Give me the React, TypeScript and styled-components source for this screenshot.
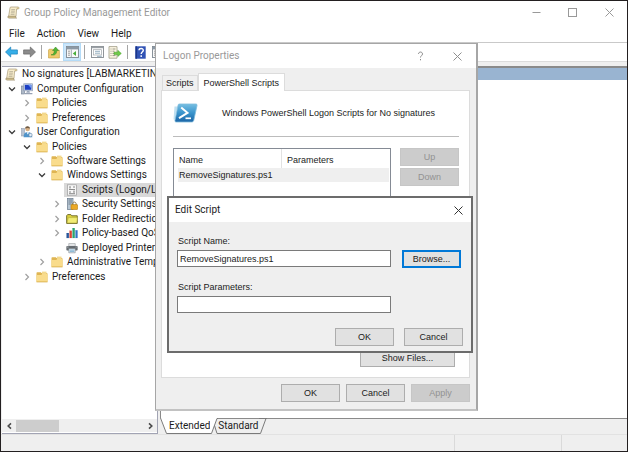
import React from "react";
import styled, { createGlobalStyle, css } from "styled-components";

const GlobalStyle = createGlobalStyle`
  * { box-sizing: border-box; }
  body { margin: 0; background: #fff; color: #1b1b1b; font: 10px/14px Roboto, "Open Sans", sans-serif; }
  button, input { font: inherit; color: inherit; margin: 0; border-radius: 0; }
  ul { list-style: none; margin: 0; padding: 0; }
`;

/* ---------- console window ---------- */

const Window = styled.main`
  position: relative;
  display: flex;
  flex-direction: column;
  min-height: 100vh;
  border: 1px solid #231f20;
  background: #efefef;
  overflow: hidden;
`;

const TitleBar = styled.header`
  display: flex;
  align-items: center;
  height: 23px;
  padding-left: 6px;
  background: #fff;
  color: #999;
`;

const WindowTitle = styled.h1`
  flex: 1;
  margin: 0 0 0 4px;
  font-size: 10px;
  font-weight: 400;
`;

const CaptionButton = styled.button<{ $width: number }>`
  display: flex;
  align-items: center;
  justify-content: center;
  width: ${(p) => p.$width}px;
  height: 22px;
  padding: 0;
  border: 0;
  background: transparent;
`;

const MenuBar = styled.nav`
  display: flex;
  gap: 12px;
  height: 19px;
  padding-left: 8px;
  background: #fff;
  border-bottom: 1px solid #c9c9c9;
`;

const MenuButton = styled.button`
  padding: 2px 0 0;
  border: 0;
  background: transparent;
  line-height: 14px;
`;

const Toolbar = styled.div`
  display: flex;
  align-items: center;
  height: 19px;
  padding-left: 1px;
  background: #fff;
  border-bottom: 1px solid #dcdcdc;
`;

const ToolButton = styled.button<{ $active?: boolean }>`
  display: flex;
  align-items: center;
  justify-content: center;
  width: 18px;
  height: 18px;
  padding: 0;
  border: 1px solid ${(p) => (p.$active ? "#b4dbf7" : "transparent")};
  background: ${(p) => (p.$active ? "#cce6fa" : "transparent")};
`;

const ToolSeparator = styled.span`
  width: 1px;
  height: 14px;
  margin: 0 3px;
  background: #a5a5a5;
`;

const Workspace = styled.div`
  flex: 1;
  display: flex;
  gap: 2px;
  padding: 4px 0 0 1px;
`;

/* ---------- tree pane ---------- */

const TreePane = styled.aside`
  display: flex;
  flex-direction: column;
  justify-content: space-between;
  width: 156px;
  background: #fff;
  border: solid #a2a4b4;
  border-width: 1px 1px 1px 0;
  overflow: hidden;
`;

const Tree = styled.ul`
  display: grid;
  grid-auto-rows: 1fr;
  height: 217px;
`;

const TreeRow = styled.li<{ $level: number }>`
  display: flex;
  align-items: center;
  padding-left: ${(p) => 3 + p.$level * 15}px;
  white-space: nowrap;
`;

const Expander = styled.button`
  display: flex;
  align-items: center;
  justify-content: center;
  flex: none;
  width: 14px;
  height: 14px;
  padding: 0;
  border: 0;
  background: transparent;
`;

const ExpanderSpace = styled.span`
  flex: none;
  width: 14px;
`;

const TreeItem = styled.span<{ $selected?: boolean; $root?: boolean }>`
  display: flex;
  flex: 1;
  align-items: center;
  gap: 4px;
  padding-left: ${(p) => (p.$root ? 0 : 2)}px;
  background: ${(p) => (p.$selected ? "#d9d9d9" : "transparent")};
`;

const ScrollBar = styled.div`
  display: flex;
  align-items: center;
  height: 13px;
  margin-bottom: 1px;
  background: #efefef;
`;

const ScrollArrow = styled.button`
  display: flex;
  align-items: center;
  justify-content: center;
  width: 14px;
  height: 13px;
  padding: 0;
  border: 0;
  background: transparent;
`;

const ScrollTrack = styled.div`
  flex: 1;
  height: 12px;
`;

const ScrollThumb = styled.div`
  width: 34%;
  height: 12px;
  background: #cdcdcd;
`;

/* ---------- detail pane ---------- */

const DetailPane = styled.section`
  flex: 1;
  display: flex;
  flex-direction: column;
`;

const DetailBody = styled.div`
  flex: 1;
  background: #fff;
  border: solid #8a8a8a;
  border-width: 2px 0 0 1px;
`;

const DetailHeader = styled.div`
  height: 12px;
  background: #99b4d1;
`;

const ViewTabs = styled.div`
  display: flex;
  height: 16px;
`;

const ViewTabsFill = styled.div`
  flex: 1;
  border-top: 1px solid #8a8a8a;
`;

const ViewTabButton = styled.button<{ $active?: boolean }>`
  display: flex;
  padding: 0;
  border: 0;
  line-height: 14px;
  background: transparent;
`;

const ViewTabText = styled.span<{ $active?: boolean }>`
  height: 16px;
  padding: ${(p) => (p.$active ? "1px 0 0 1px" : "0")};
  background: ${(p) => (p.$active ? "#fff" : "#efefef")};
  border-bottom: 1px solid #7a7a7a;
  border-top: ${(p) => (p.$active ? "0" : "1px solid #8a8a8a")};
`;

const StatusBar = styled.footer`
  display: grid;
  grid-template-columns: 453fr 107fr 65fr;
  height: 17px;
  border-top: 1px solid #e2e2e2;
`;

const StatusCell = styled.span`
  border-right: 1px solid #dadada;
  &:last-child { border-right: 0; }
`;

/* ---------- dialogs ---------- */

const dialogText = css`
  font: 9px/12px "Liberation Sans", Arial, sans-serif;
`;

const PropertiesDialog = styled.section`
  position: absolute;
  left: 154px;
  top: 42px;
  width: 323px;
  background: #efefef;
  border: 1px solid #a6a6a6;
  border-right-width: 2px;
  border-bottom: 2px solid #c2c2c2;
  ${dialogText}
`;

const DialogTitleBar = styled.header<{ $muted?: boolean }>`
  display: flex;
  align-items: center;
  height: 24px;
  padding-left: ${(p) => (p.$muted ? 7 : 6)}px;
  background: #fff;
  color: ${(p) => (p.$muted ? "#999" : "#1b1b1b")};
`;

const DialogTitle = styled.h2`
  flex: 1;
  margin: 0;
  font: 400 10px/14px Roboto, "Open Sans", sans-serif;
`;

const PropertyTabs = styled.div`
  display: flex;
  align-items: flex-end;
  height: 22px;
  padding: 0 6px;
`;

const PropertyTab = styled.button<{ $active?: boolean }>`
  height: ${(p) => (p.$active ? 18 : 15)}px;
  padding: 0 ${(p) => (p.$active ? 5 : 3)}px;
  border: 1px solid #dcdcdc;
  border-bottom: 0;
  background: ${(p) => (p.$active ? "#fff" : "#f0f0f0")};
  margin-bottom: ${(p) => (p.$active ? -1 : 0)}px;
`;

const PropertySheet = styled.div`
  display: flex;
  flex-direction: column;
  height: 288px;
  margin: 0 6px 0 5px;
  padding: 0 10px 10px 11px;
  background: #fff;
  border: 1px solid #dcdcdc;
`;

const SheetHeading = styled.div`
  display: flex;
  align-items: center;
  gap: 24px;
  height: 46px;
  padding-bottom: 2px;
  border-bottom: 1px solid #bcbcbc;
`;

const SheetText = styled.p`
  margin: 0;
`;

const ScriptSection = styled.div`
  display: flex;
  align-items: flex-start;
  gap: 9px;
  flex: 1;
  margin-top: 11px;
`;

const ScriptListBox = styled.div`
  flex: 1;
  height: 180px;
  padding: 0 1px 0 4px;
  border: 1px solid #858b95;
`;

const ScriptTable = styled.table`
  width: 100%;
  border-collapse: collapse;
  table-layout: fixed;
`;

const HeaderCell = styled.th<{ $share: number }>`
  width: ${(p) => p.$share}%;
  height: 19px;
  padding: 2px 0 0 1px;
  text-align: left;
  font-weight: 400;
  & + & { padding-left: 5px; border-left: 1px solid #e2e2e2; }
`;

const ScriptCell = styled.td`
  height: 14px;
  padding: 0 0 0 1px;
  background: #efefef;
`;

const ButtonColumn = styled.div`
  display: flex;
  flex-direction: column;
  gap: 2px;
`;

const PushButton = styled.button<{ $focused?: boolean; $wide?: boolean }>`
  flex: none;
  width: ${(p) => (p.$wide ? 95 : 59)}px;
  height: 18px;
  padding: 0;
  border: ${(p) => (p.$focused ? "2px solid #0078d7" : "1px solid #adadad")};
  background: #e1e1e1;
  &:disabled {
    border-color: #c6c6c6;
    background: #cccccc;
    color: #929292;
  }
`;

const DialogActions = styled.div<{ $inset?: number }>`
  display: flex;
  justify-content: flex-end;
  gap: 10px;
  padding: 2px ${(p) => p.$inset ?? 0}px 0 0;
`;

const SheetActions = styled.div`
  display: flex;
  justify-content: flex-end;
  gap: 6px;
  padding: 6px 6px 7px;
`;

const EditDialog = styled.section`
  position: absolute;
  left: 11px;
  top: 152px;
  width: 306px;
  background: #efefef;
  border: 2px solid #6c6c6c;
`;

const EditBody = styled.form`
  display: flex;
  flex-direction: column;
  padding: 13px 8px 5px;
`;

const FieldLabel = styled.label`
  margin-bottom: 3px;
  padding-left: 1px;
`;

const FieldRow = styled.div`
  display: flex;
  gap: 11px;
  padding-right: 2px;
  margin-bottom: 13px;
`;

const TextBox = styled.input`
  flex: 1;
  min-width: 0;
  height: 17px;
  padding: 0 2px;
  border: 1px solid #7a7a7a;
  background: #fff;
  outline: 0;
`;

const ButtonSpace = styled.span`
  width: 59px;
`;

/* ---------- icons ---------- */

const CloseIcon = ({ color }: { color: string }) => (
  <svg width="9" height="9" viewBox="0 0 9 9" aria-hidden="true">
    <path d="M.5.5l8 8M8.5.5l-8 8" stroke={color} fill="none" />
  </svg>
);

const ScrollIcon = () => (
  <svg width="13" height="13" viewBox="0 0 13 13" aria-hidden="true">
    <path d="M3.500 1h7.700c1 0 1.300 2-.2 2H9.600L9 10.500H1.600L3 2z" fill="#f7eccb" stroke="#a89a78" strokeWidth=".7" />
    <path d="M1 10.200h7.600c-.3 1 .2 1.800 1 1.900H2C.9 12.100.6 11 1 10.200z" fill="#d9c793" stroke="#9c8c68" strokeWidth=".7" />
    <path d="M4.300 3.600h3.800M4.100 5.200h3.800M3.800 6.800h3.900M3.600 8.400h3.900" stroke="#a9a08b" strokeWidth=".7" />
    <path d="M9.700 1.400c.4.4.3 1.100 0 1.500h1.600c.7-.5.5-1.400 0-1.500z" fill="#cdb986" />
  </svg>
);

const FolderIcon = () => (
  <svg width="12" height="12" viewBox="0 0 12 12" aria-hidden="true">
    <path d="M.5 10.500V1.800l.6-.6h3.700l.8.8h5.300l.6.6v7.900z" fill="#dfb552" />
    <path d="M6 .6h4.500v2.500H6z" fill="#f3d88d" />
    <path d="M.5 3.900h4.700l1-1h5.300v8H.5z" fill="#f9dc8c" />
    <path d="M.5 10.900h11" stroke="#d5a944" strokeWidth=".8" />
  </svg>
);

const ComputerIcon = () => (
  <svg width="12" height="12" viewBox="0 0 12 12" aria-hidden="true">
    <rect x=".5" y="3" width="3" height="8" fill="#aeb9c8" stroke="#6f7d92" strokeWidth=".6" />
    <rect x="2.800" y=".8" width="8.600" height="7" fill="#dbe3f0" stroke="#8795ae" strokeWidth=".7" />
    <rect x="3.800" y="1.800" width="6.600" height="5" fill="#1c3fc4" />
    <path d="M7 1.800h3.400v3.700z" fill="#6f9af0" />
    <path d="M6 8h2.400l.6 1.800H5.200z" fill="#9ba7ba" />
    <path d="M4 10.200h7.400v1H4z" fill="#7d8aa0" />
  </svg>
);

const UserIcon = () => (
  <svg width="12" height="12" viewBox="0 0 12 12" aria-hidden="true">
    <rect x=".5" y="2.500" width="3" height="7.500" fill="#b9c4d2" stroke="#8592a5" strokeWidth=".5" />
    <circle cx="6.600" cy="3" r="2.300" fill="#d9b184" />
    <path d="M4.300 2.800C4 .8 5.400.2 6.600.3c1.600 0 2.500 1 2.200 2.400-1.200-.9-3-.9-4.500.1z" fill="#6f5a43" />
    <path d="M2.600 11.300c0-3.600 1.500-5.200 4-5.200s4.500 1.600 4.700 5.200z" fill="#4f93c9" />
    <path d="M5.500 6.200l1.300 2.300 1.300-2.200z" fill="#fff" />
    <circle cx="9.500" cy="9" r="1.700" fill="#e4edf6" stroke="#6688a8" strokeWidth=".6" />
  </svg>
);

const ScriptDocIcon = () => (
  <svg width="12" height="12" viewBox="0 0 12 12" aria-hidden="true">
    <rect x="1.400" y=".8" width="9" height="10.400" fill="#f7f7f7" stroke="#9c9c9c" strokeWidth=".7" />
    <path d="M3 3h2M7 3h2M3 5.500h6M3 8h2M7 8h2M3 9.700h6" stroke="#7b7b7b" strokeWidth=".9" />
    <path d="M4 3v3M8 5v3" stroke="#9a9a9a" strokeWidth=".7" />
  </svg>
);

const SecurityIcon = () => (
  <svg width="12" height="12" viewBox="0 0 12 12" aria-hidden="true">
    <rect x="1.500" y=".5" width="5.500" height="11" fill="#b7c6d3" stroke="#68798b" strokeWidth=".7" />
    <path d="M2.500 2h3.500M2.500 4h3.500M2.500 6h3" stroke="#5c6c7d" strokeWidth=".8" />
    <path d="M6.700 7V5.800c0-2.300 3.400-2.300 3.400 0V7" fill="none" stroke="#8c7b4c" strokeWidth="1" />
    <rect x="5" y="6.600" width="6.600" height="4.900" rx=".6" fill="#eba925" stroke="#b27a13" strokeWidth=".6" />
  </svg>
);

const RedirectIcon = () => (
  <svg width="12" height="12" viewBox="0 0 13 12" aria-hidden="true">
    <path d="M.7 10.800V2.400L1.800 1.200h3.400l1.100 1.300h5.900v8.300z" fill="#d9cf3e" stroke="#5f5b1c" strokeWidth=".9" />
    <path d="M1.200 10.300l1.300-5.800h9.900l-.8 5.800z" fill="#f2ec74" stroke="#a39c30" strokeWidth=".5" />
  </svg>
);

const QosIcon = () => (
  <svg width="12" height="12" viewBox="0 0 13 12" aria-hidden="true">
    <path d="M.4 6h2.700v5.500H.4z" fill="#1c4e95" />
    <path d="M3.600 3.400h2.700v8.100H3.600z" fill="#d93a2b" />
    <path d="M6.800.6h2.700v10.900H6.800z" fill="#25a06a" />
    <path d="M10 3h2.600v8.500H10z" fill="#2b72c4" />
    <path d="M.8 6.300v5M4 3.800v7.400M7.200 1v10.200M10.400 3.400v7.800" stroke="#fff" strokeWidth=".5" opacity=".6" />
  </svg>
);

const PrinterIcon = () => (
  <svg width="12" height="12" viewBox="0 0 13 12" aria-hidden="true">
    <path d="M3 1.200h7v3H3z" fill="#e8eaec" stroke="#8c9196" strokeWidth=".6" />
    <rect x=".4" y="3.800" width="12.200" height="4.800" rx=".8" fill="#656b70" />
    <path d="M1.200 5h1.600M10.400 5h1.200" stroke="#c5cacd" strokeWidth=".8" />
    <path d="M3 6.600h7v4.600H3z" fill="#dcebf4" stroke="#7b8287" strokeWidth=".6" />
    <path d="M4 8.300h5M4 9.700h5" stroke="#5b9ac2" strokeWidth=".7" />
  </svg>
);

const Chevron = ({ open }: { open?: boolean }) => (
  <svg width="8" height="8" viewBox="0 0 8 8" aria-hidden="true">
    {open ? (
      <path d="M1 2.500l3 3 3-3" fill="none" stroke="#3c3c3c" strokeWidth="1.300" />
    ) : (
      <path d="M2.500 1l3 3-3 3" fill="none" stroke="#a0a0a0" strokeWidth="1.200" />
    )}
  </svg>
);

const ScrollChevron = ({ right }: { right?: boolean }) => (
  <svg width="7" height="8" viewBox="0 0 7 8" aria-hidden="true">
    <path d={right ? "M2 1.300L4.800 4 2 6.700" : "M5 1.300L2.200 4 5 6.700"} fill="none" stroke="#4a4a4a" strokeWidth="1.600" />
  </svg>
);

const ArrowIcon = ({ forward }: { forward?: boolean }) => (
  <svg width="13" height="12" viewBox="0 0 13 12" aria-hidden="true">
    {forward ? (
      <path d="M12.500 6L7.300 1v2.900H.6v4.200h6.700V11z" fill="#8b8b8b" stroke="#666" strokeWidth=".7" />
    ) : (
      <path d="M.5 6l5.200-5v2.900h6.700v4.200H5.700V11z" fill="#36aee8" stroke="#1780bb" strokeWidth=".7" />
    )}
  </svg>
);

const UpFolderIcon = () => (
  <svg width="12" height="13" viewBox="0 0 12 13" aria-hidden="true">
    <path d="M.5 12V4l.7-.8h3.400l1 1h5.800V12z" fill="#efcb6c" stroke="#c69c3c" strokeWidth=".6" />
    <path d="M3 8.800c2.400-.2 3.200-1.500 3.400-4.300H4.600L7.600 1l3 3.500H8.800c-.2 3.500-2 5.400-5.800 4.300z" fill="#53b535" stroke="#368420" strokeWidth=".5" />
  </svg>
);

const PanesIcon = () => (
  <svg width="13" height="12" viewBox="0 0 13 12" aria-hidden="true">
    <rect x=".5" y=".5" width="12" height="11" fill="#f9f9f9" stroke="#7d8790" strokeWidth=".9" />
    <path d="M.5.8h12v2.600H.5z" fill="#8c99a5" />
    <path d="M2 5.200h2M2 7.200h2M2 9.200h2" stroke="#888" strokeWidth=".8" />
    <path d="M5.300 3.500v8" stroke="#8c99a5" strokeWidth=".8" />
    <path d="M10 5v5L6.800 7.500z" fill="#49ad3b" />
  </svg>
);

const PropertiesIcon = () => (
  <svg width="13" height="12" viewBox="0 0 13 12" aria-hidden="true">
    <rect x=".5" y=".5" width="12" height="11" fill="#fff" stroke="#858b90" strokeWidth=".9" />
    <path d="M.8 1.500h11.400" stroke="#9ba1a6" strokeWidth="1.400" />
    <rect x="2.500" y="3.700" width="8" height="5.300" fill="#fff" stroke="#a0a6aa" strokeWidth=".7" />
    <path d="M4 5.300h5M4 7.200h5M6 10.300h4.800" stroke="#7799b0" strokeWidth=".8" />
  </svg>
);

const ExportIcon = () => (
  <svg width="14" height="13" viewBox="0 0 14 13" aria-hidden="true">
    <path d="M1 .6h8v11.600H1z" fill="#fdf8e4" stroke="#9d9984" strokeWidth=".8" />
    <path d="M2.500 3h1M4.500 3h3M2.500 5.200h1M4.500 5.200h2M2.500 7.400h1M4.500 7.400h2M2.500 9.600h1M4.500 9.600h3" stroke="#7e7c70" strokeWidth=".8" />
    <path d="M6 6.200h3.800V4.300L13.300 7.400l-3.500 3.100V8.600H6z" fill="#6fcb46" stroke="#409a24" strokeWidth=".5" />
  </svg>
);

const HelpIcon = () => (
  <svg width="11" height="13" viewBox="0 0 11 13" aria-hidden="true">
    <rect x=".3" y=".3" width="10.400" height="12.400" fill="#3153b5" />
    <path d="M1.300.3v12.400" stroke="#1c3789" strokeWidth="1.500" />
    <path d="M4 4.300c.1-2.500 4.400-2.400 4.300.1-.1 1.600-2.100 1.700-2.100 3.500M6.200 9.300v1.600" fill="none" stroke="#fff" strokeWidth="1.400" />
  </svg>
);

const PowerShellIcon = () => (
  <svg width="25" height="20" viewBox="0 0 25 20" aria-hidden="true">
    <defs>
      <linearGradient id="ps-face" x1="0" y1="0" x2="0" y2="1">
        <stop offset="0" stopColor="#77bfe2" />
        <stop offset=".5" stopColor="#3a94cc" />
        <stop offset="1" stopColor="#1b64a5" />
      </linearGradient>
    </defs>
    <path d="M1.500 3.500h3l-2.800 13H.5z" fill="#bfe0f1" />
    <path d="M6.300 1h16.500c1 0 1.400.7 1.200 1.600l-3.200 14.600c-.3 1.100-1 1.800-2.100 1.800H3.200c-1 0-1.500-.7-1.200-1.700L5 2.500C5.200 1.500 5.500 1 6.300 1z" fill="url(#ps-face)" stroke="#7dbbdc" strokeWidth=".8" />
    <path d="M8.200 4.500l6.300 5.300-8.500 5.400" fill="none" stroke="#fff" strokeWidth="2" />
    <path d="M12.500 15.300h5.500" stroke="#fff" strokeWidth="1.700" />
  </svg>
);

const TabEdge = ({ kind }: { kind: "first" | "join" | "end" }) => {
  if (kind === "first")
    return (
      <svg width="8" height="16" viewBox="0 0 8 16" aria-hidden="true">
        <path d="M0 0h8v15.500H6.500z" fill="#fff" />
        <path d="M.5 0l6 15.500H8" fill="none" stroke="#7a7a7a" />
      </svg>
    );
  if (kind === "join")
    return (
      <svg width="8" height="16" viewBox="0 0 8 16" aria-hidden="true">
        <path d="M0 0h7L2 15.500H0z" fill="#fff" />
        <path d="M0 15.500h1.500L7 .5h1M4.500 7.500L7 15.500h1" fill="none" stroke="#7a7a7a" />
      </svg>
    );
  return (
    <svg width="8" height="16" viewBox="0 0 8 16" aria-hidden="true">
      <path d="M0 .5h8M0 15.500h1.500L7 .5" fill="none" stroke="#7a7a7a" />
    </svg>
  );
};

/* ---------- data ---------- */

type Node = { label: string; level: number; state: "open" | "closed" | "leaf"; icon: React.ReactNode; selected?: boolean };

const nodes: Node[] = [
  { label: "Computer Configuration", level: 0, state: "open", icon: <ComputerIcon /> },
  { label: "Policies", level: 1, state: "closed", icon: <FolderIcon /> },
  { label: "Preferences", level: 1, state: "closed", icon: <FolderIcon /> },
  { label: "User Configuration", level: 0, state: "open", icon: <UserIcon /> },
  { label: "Policies", level: 1, state: "open", icon: <FolderIcon /> },
  { label: "Software Settings", level: 2, state: "closed", icon: <FolderIcon /> },
  { label: "Windows Settings", level: 2, state: "open", icon: <FolderIcon /> },
  { label: "Scripts (Logon/Logoff)", level: 3, state: "leaf", icon: <ScriptDocIcon />, selected: true },
  { label: "Security Settings", level: 3, state: "closed", icon: <SecurityIcon /> },
  { label: "Folder Redirection", level: 3, state: "closed", icon: <RedirectIcon /> },
  { label: "Policy-based QoS", level: 3, state: "closed", icon: <QosIcon /> },
  { label: "Deployed Printers", level: 3, state: "leaf", icon: <PrinterIcon /> },
  { label: "Administrative Templates", level: 2, state: "closed", icon: <FolderIcon /> },
  { label: "Preferences", level: 1, state: "closed", icon: <FolderIcon /> },
];

function PolicyTree() {
  return (
    <TreePane>
      <Tree role="tree">
        <TreeRow $level={0} role="treeitem">
          <TreeItem $root>
            <ScrollIcon />
            No signatures [LABMARKETING
          </TreeItem>
        </TreeRow>
        {nodes.map((n, i) => (
          <TreeRow key={i} $level={n.level} role="treeitem" aria-selected={!!n.selected}>
            {n.state === "leaf" ? (
              <ExpanderSpace />
            ) : (
              <Expander aria-label={`Toggle ${n.label}`}>
                <Chevron open={n.state === "open"} />
              </Expander>
            )}
            <TreeItem $selected={n.selected}>
              {n.icon}
              {n.label}
            </TreeItem>
          </TreeRow>
        ))}
      </Tree>
      <ScrollBar>
        <ScrollArrow aria-label="Scroll left"><ScrollChevron /></ScrollArrow>
        <ScrollTrack><ScrollThumb /></ScrollTrack>
        <ScrollArrow aria-label="Scroll right"><ScrollChevron right /></ScrollArrow>
      </ScrollBar>
    </TreePane>
  );
}

function EditScript() {
  return (
    <EditDialog role="dialog" aria-label="Edit Script">
      <DialogTitleBar>
        <DialogTitle>Edit Script</DialogTitle>
        <CaptionButton $width={25} aria-label="Close"><CloseIcon color="#333" /></CaptionButton>
      </DialogTitleBar>
      <EditBody onSubmit={(e) => e.preventDefault()}>
        <FieldLabel htmlFor="script-name">Script Name:</FieldLabel>
        <FieldRow>
          <TextBox id="script-name" defaultValue="RemoveSignatures.ps1" />
          <PushButton type="button" $focused>Browse...</PushButton>
        </FieldRow>
        <FieldLabel htmlFor="script-parameters">Script Parameters:</FieldLabel>
        <FieldRow>
          <TextBox id="script-parameters" />
          <ButtonSpace />
        </FieldRow>
        <DialogActions>
          <PushButton type="submit">OK</PushButton>
          <PushButton type="button">Cancel</PushButton>
        </DialogActions>
      </EditBody>
    </EditDialog>
  );
}

function LogonProperties() {
  return (
    <PropertiesDialog role="dialog" aria-label="Logon Properties">
      <DialogTitleBar $muted>
        <DialogTitle>Logon Properties</DialogTitle>
        <CaptionButton $width={36} aria-label="Help">
          <svg width="7" height="10" viewBox="0 0 7 10" aria-hidden="true">
            <path d="M1.500 3c0-2.600 4-2.600 4 0 0 1.500-2 1.800-2 3.500M3.500 8v1.300" fill="none" stroke="#8a8a8a" />
          </svg>
        </CaptionButton>
        <CaptionButton $width={38} aria-label="Close"><CloseIcon color="#8f8f8f" /></CaptionButton>
      </DialogTitleBar>
      <PropertyTabs role="tablist">
        <PropertyTab role="tab">Scripts</PropertyTab>
        <PropertyTab role="tab" aria-selected $active>PowerShell Scripts</PropertyTab>
      </PropertyTabs>
      <PropertySheet>
        <SheetHeading>
          <PowerShellIcon />
          <SheetText>Windows PowerShell Logon Scripts for No signatures</SheetText>
        </SheetHeading>
        <ScriptSection>
          <ScriptListBox>
            <ScriptTable>
              <thead>
                <tr>
                  <HeaderCell scope="col" $share={49}>Name</HeaderCell>
                  <HeaderCell scope="col" $share={51}>Parameters</HeaderCell>
                </tr>
              </thead>
              <tbody>
                <tr>
                  <ScriptCell>RemoveSignatures.ps1</ScriptCell>
                  <ScriptCell />
                </tr>
              </tbody>
            </ScriptTable>
          </ScriptListBox>
          <ButtonColumn>
            <PushButton disabled>Up</PushButton>
            <PushButton disabled>Down</PushButton>
          </ButtonColumn>
        </ScriptSection>
        <DialogActions $inset={4}>
          <PushButton $wide>Show Files...</PushButton>
        </DialogActions>
      </PropertySheet>
      <SheetActions>
        <PushButton>OK</PushButton>
        <PushButton>Cancel</PushButton>
        <PushButton disabled>Apply</PushButton>
      </SheetActions>
      <EditScript />
    </PropertiesDialog>
  );
}

export default function App() {
  return (
    <>
      <GlobalStyle />
      <Window>
        <TitleBar>
          <ScrollIcon />
          <WindowTitle>Group Policy Management Editor</WindowTitle>
          <CaptionButton $width={36} aria-label="Minimize">
            <svg width="9" height="9" viewBox="0 0 9 9" aria-hidden="true"><path d="M.5 4.500h8" stroke="#999" /></svg>
          </CaptionButton>
          <CaptionButton $width={37} aria-label="Maximize">
            <svg width="9" height="9" viewBox="0 0 9 9" aria-hidden="true"><rect x=".5" y=".5" width="8" height="8" fill="none" stroke="#999" /></svg>
          </CaptionButton>
          <CaptionButton $width={36} aria-label="Close"><CloseIcon color="#999" /></CaptionButton>
        </TitleBar>
        <MenuBar>
          <MenuButton>File</MenuButton>
          <MenuButton>Action</MenuButton>
          <MenuButton>View</MenuButton>
          <MenuButton>Help</MenuButton>
        </MenuBar>
        <Toolbar role="toolbar">
          <ToolButton aria-label="Back"><ArrowIcon /></ToolButton>
          <ToolButton aria-label="Forward"><ArrowIcon forward /></ToolButton>
          <ToolSeparator />
          <ToolButton aria-label="Up one level"><UpFolderIcon /></ToolButton>
          <ToolButton aria-label="Show console tree" $active><PanesIcon /></ToolButton>
          <ToolSeparator />
          <ToolButton aria-label="Properties"><PropertiesIcon /></ToolButton>
          <ToolButton aria-label="Export list"><ExportIcon /></ToolButton>
          <ToolSeparator />
          <ToolButton aria-label="Help"><HelpIcon /></ToolButton>
          <ToolButton aria-label="Show action pane"><PanesIcon /></ToolButton>
        </Toolbar>
        <Workspace>
          <PolicyTree />
          <DetailPane>
            <DetailBody><DetailHeader /></DetailBody>
            <ViewTabs role="tablist">
              <ViewTabButton role="tab" aria-selected>
                <TabEdge kind="first" />
                <ViewTabText $active>Extended</ViewTabText>
              </ViewTabButton>
              <TabEdge kind="join" />
              <ViewTabButton role="tab">
                <ViewTabText>Standard</ViewTabText>
                <TabEdge kind="end" />
              </ViewTabButton>
              <ViewTabsFill />
            </ViewTabs>
          </DetailPane>
        </Workspace>
        <StatusBar>
          <StatusCell />
          <StatusCell />
          <StatusCell />
        </StatusBar>
        <LogonProperties />
      </Window>
    </>
  );
}
